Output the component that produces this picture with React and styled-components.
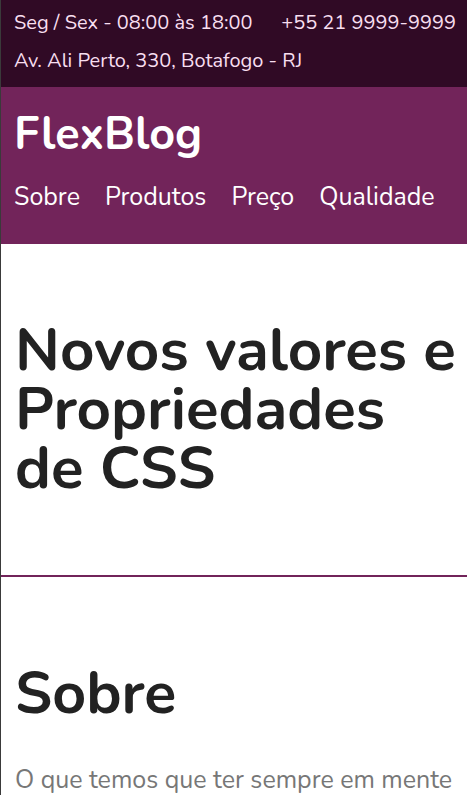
import React from "react";
import styled, { createGlobalStyle } from "styled-components";

const GlobalStyle = createGlobalStyle`
  * {
    box-sizing: border-box;
  }
  body {
    margin: 0;
    font-family: "Nunito", "Lato", "Noto Sans", sans-serif;
    background: #ffffff;
  }
`;

const App = () => {
  return (
    <Page>
      <GlobalStyle />
      <TopBar>
        <TopRow>
          <TopText>Seg / Sex - 08:00 às 18:00</TopText>
          <TopText>+55 21 9999-9999</TopText>
        </TopRow>
        <TopRow>
          <TopText>Av. Ali Perto, 330, Botafogo - RJ</TopText>
        </TopRow>
      </TopBar>

      <Header>
        <Logo>FlexBlog</Logo>
        <Nav>
          <NavLink href="#sobre">Sobre</NavLink>
          <NavLink href="#produtos">Produtos</NavLink>
          <NavLink href="#preco">Preço</NavLink>
          <NavLink href="#qualidade">Qualidade</NavLink>
        </Nav>
      </Header>

      <Hero>
        <HeroTitle>Novos valores e Propriedades de CSS</HeroTitle>
      </Hero>

      <Section id="sobre">
        <SectionTitle>Sobre</SectionTitle>
        <Text>O que temos que ter sempre em mente</Text>
      </Section>
    </Page>
  );
};

export default App;

const Page = styled.div`
  min-height: 795px;
  border-left: 1px solid #3a3a3a;
  overflow: hidden;
`;

const TopBar = styled.div`
  background: #300a25;
  padding: 9px 11px 12px 13px;
  display: flex;
  flex-direction: column;
  gap: 10px;
`;

const TopRow = styled.div`
  display: flex;
  justify-content: space-between;
`;

const TopText = styled.span`
  color: #f8dff0;
  font-size: 20px;
  line-height: 28px;
  white-space: nowrap;
`;

const Header = styled.header`
  background: #72245a;
  padding: 20px 13px 30px;
`;

const Logo = styled.h1`
  margin: 0;
  color: #ffffff;
  font-size: 45px;
  font-weight: 700;
  line-height: 56px;
`;

const Nav = styled.nav`
  display: flex;
  gap: 25px;
  margin-top: 17px;
`;

const NavLink = styled.a`
  color: #ffffff;
  text-decoration: none;
  font-size: 25px;
  line-height: 34px;
  white-space: nowrap;
`;

const Hero = styled.section`
  padding: 77px 2px 77px 14px;
  border-bottom: 2px solid #72245a;
`;

const HeroTitle = styled.h2`
  margin: 0;
  color: #222222;
  font-size: 60px;
  font-weight: 700;
  line-height: 59px;
`;

const Section = styled.section`
  padding: 87px 2px 0 14px;
`;

const SectionTitle = styled.h2`
  margin: 0;
  color: #222222;
  font-size: 59px;
  font-weight: 700;
  line-height: 60px;
`;

const Text = styled.p`
  margin: 40px 0 0;
  color: #777777;
  font-size: 25px;
  line-height: 32px;
`;
